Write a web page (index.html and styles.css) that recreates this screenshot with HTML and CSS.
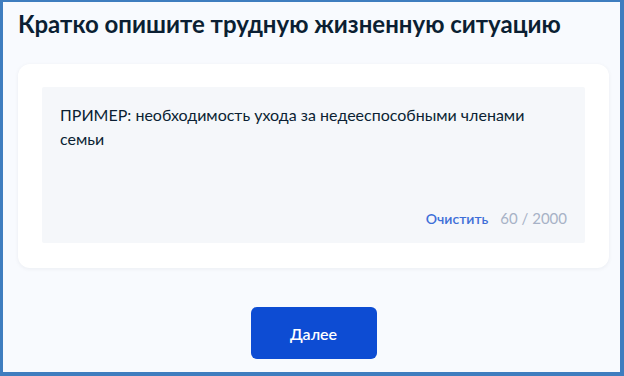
FILE: index.html
```html
<!DOCTYPE html>
<html lang="ru">
<head>
<meta charset="utf-8">
<link rel="stylesheet" href="styles.css">
</head>
<body>
<div class="frame">
  <h1 class="title">Кратко опишите трудную жизненную ситуацию</h1>
  <div class="card">
    <div class="field">
      <p class="text">ПРИМЕР: необходимость ухода за недееспособными членами семьи</p>
      <div class="meta">
        <span class="clear">Очистить</span>
        <span class="count">60 / 2000</span>
      </div>
    </div>
  </div>
  <div class="actions">
    <button class="btn">Далее</button>
  </div>
</div>
</body>
</html>
```

FILE: styles.css
```css
html, body {
  margin: 0;
  padding: 0;
}
body {
  width: 624px;
  height: 376px;
  overflow: hidden;
  font-family: Lato, "Noto Sans", sans-serif;
}
.frame {
  box-sizing: border-box;
  width: 624px;
  height: 376px;
  border-style: solid;
  border-color: #3f7dbf;
  border-width: 2px 4px 4px 3px;
  background: #f8fafe;
  padding: 0 11px 0 15px;
  display: flex;
  flex-direction: column;
}
.title {
  margin: 6px 0 0 0;
  font-size: 24px;
  line-height: 32px;
  font-weight: 700;
  color: #0b1f33;
}
.card {
  margin-top: 24px;
  background: #ffffff;
  border-radius: 12px;
  box-shadow: 0 1px 4px rgba(11, 31, 51, 0.06);
  padding: 23px 24px 25px 24px;
}
.field {
  background: #f5f7fa;
  border-radius: 2px;
  height: 156px;
  box-sizing: border-box;
  padding: 16px 18px 14px 18px;
  display: flex;
  flex-direction: column;
}
.text {
  margin: 0;
  font-size: 16px;
  line-height: 24px;
  color: #0b1f33;
  padding-right: 40px;
  flex: 1;
}
.meta {
  display: flex;
  justify-content: flex-end;
  align-items: baseline;
  gap: 12px;
  font-size: 14px;
  line-height: 20px;
}
.clear {
  color: #3e6fd8;
  font-weight: 600;
}
.count {
  color: #a7b2c6;
  font-size: 15px;
}
.actions {
  display: flex;
  justify-content: center;
  margin-top: 39px;
}
.btn {
  width: 126px;
  height: 52px;
  border: none;
  border-radius: 6px;
  background: #0d4cd3;
  color: #ffffff;
  font-family: Lato, "Noto Sans", sans-serif;
  font-size: 16px;
  font-weight: 600;
}
```
